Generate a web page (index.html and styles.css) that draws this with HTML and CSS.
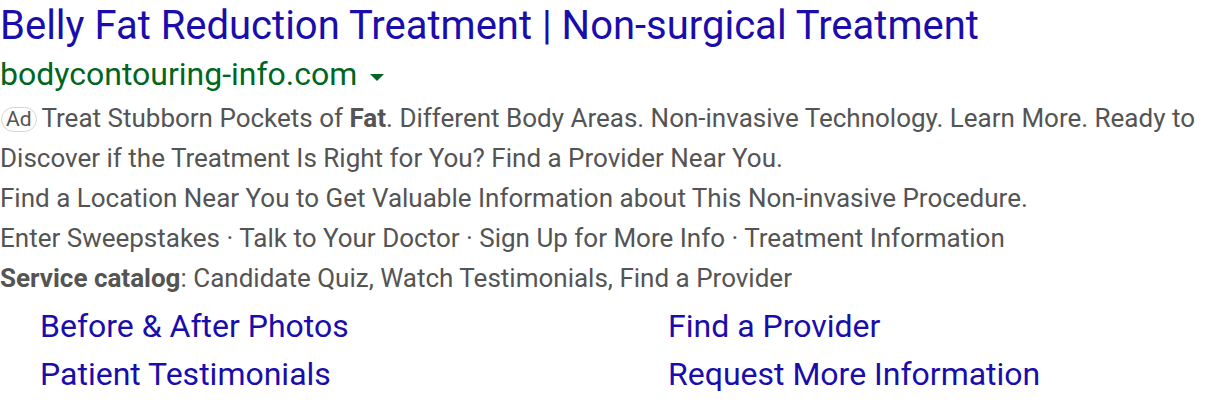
FILE: index.html
```html
<!DOCTYPE html>
<html>
<head>
<meta charset="utf-8">
<link rel="stylesheet" href="styles.css">
</head>
<body>
<div class="ad">
  <h3 class="title">Belly Fat Reduction Treatment | Non-surgical Treatment</h3>
  <div class="url">bodycontouring-info.com <span class="caret"></span></div>
  <div class="desc"><span class="badge">Ad</span> Treat Stubborn Pockets of <b>Fat</b>. Different Body Areas. Non-invasive Technology. Learn More. Ready to Discover if the Treatment Is Right for You? Find a Provider Near You.</div>
  <div class="desc">Find a Location Near You to Get Valuable Information about This Non-invasive Procedure.</div>
  <div class="desc">Enter Sweepstakes · Talk to Your Doctor · Sign Up for More Info · Treatment Information</div>
  <div class="desc"><b>Service catalog</b>: Candidate Quiz, Watch Testimonials, Find a Provider</div>
  <div class="sitelinks">
    <a>Before &amp; After Photos</a>
    <a>Find a Provider</a>
    <a>Patient Testimonials</a>
    <a>Request More Information</a>
  </div>
</div>
</body>
</html>
```
FILE: styles.css
```css
html, body {
  margin: 0;
  padding: 0;
  background: #fff;
}
body {
  font-family: Roboto, "Liberation Sans", Arial, sans-serif;
}
.ad {
  width: 1216px;
  padding-top: 2px;
}
.title {
  margin: 0;
  font-weight: 400;
  font-size: 40px;
  line-height: 48px;
  color: #1a0dab;
  white-space: nowrap;
}
.url {
  font-size: 32px;
  line-height: 48px;
  color: #006621;
}
.caret {
  display: inline-block;
  width: 0;
  height: 0;
  border-left: 7px solid transparent;
  border-right: 7px solid transparent;
  border-top: 7px solid #006621;
  vertical-align: 4px;
  margin-left: 5px;
}
.desc {
  font-size: 26px;
  line-height: 40px;
  color: #545454;
}
.desc b {
  font-weight: 700;
  color: #545454;
}
.badge {
  display: inline-block;
  font-size: 21px;
  line-height: 23px;
  padding: 0 4px;
  border: 1px solid #d6d6d6;
  border-radius: 13px;
  color: #545454;
  margin-left: 1px;
  margin-right: -1px;
  vertical-align: 1px;
}
.sitelinks {
  display: grid;
  grid-template-columns: 628px 1fr;
  padding-left: 40px;
  margin-top: 4px;
}
.sitelinks a {
  font-size: 32px;
  line-height: 48px;
  color: #1a0dab;
}
```
